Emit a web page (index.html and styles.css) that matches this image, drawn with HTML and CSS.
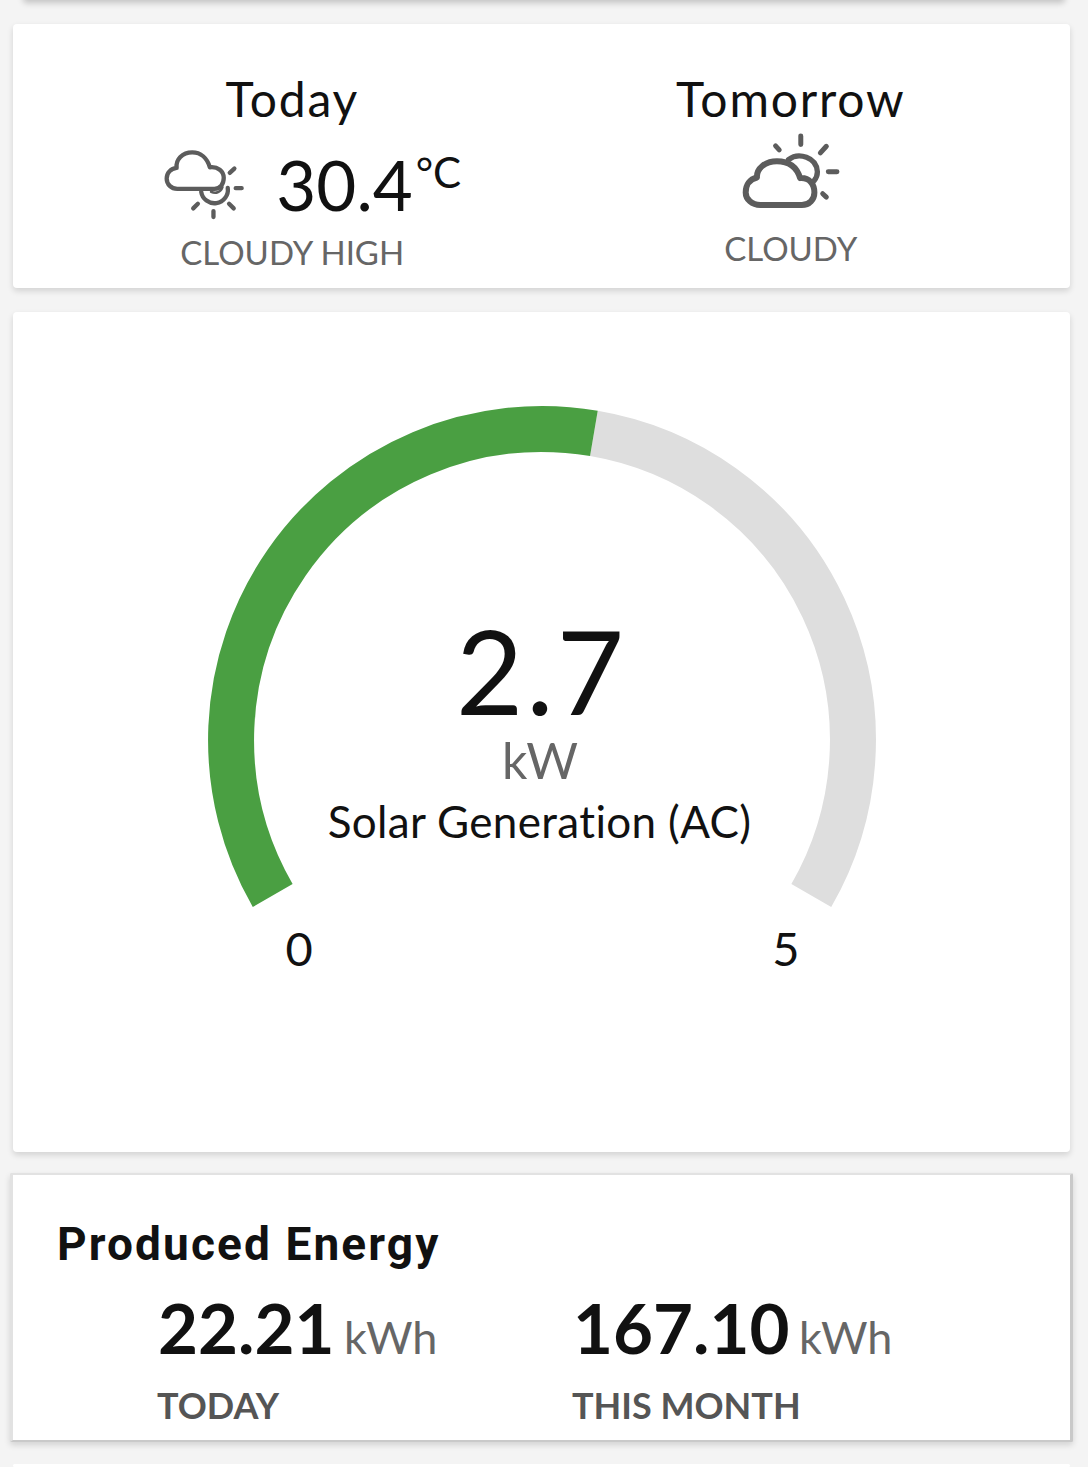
FILE: index.html
```html
<!DOCTYPE html>
<html lang="en">
  <head>
    <meta charset="UTF-8" />
    <meta name="viewport" content="width=device-width, initial-scale=1.0" />
    <title>Solar Dashboard</title>
    <link rel="stylesheet" href="styles.css">
  </head>
  <body>
    <div class="card card-prev"></div>

    <div class="card weather">
      <div class="weather-day">
        <div class="day-title">Today</div>
        <div class="today-row">
          <svg class="icon-today" viewBox="70 260 250 220" fill="none" stroke="#5c5c5c" stroke-width="13" stroke-linecap="round" stroke-linejoin="round">
            <path d="M110 383H222C240 383 250 368 250 350C250 330 232 315 208 318C200 290 180 273 155 273C125 273 105 295 108 320C90 322 78 335 78 352C78 370 92 383 110 383Z" />
            <path d="M262 380A40 40 0 0 1 182 392" />
            <path d="M246 378C240 395 225 398 212 392" stroke-width="8" />
            <path d="M268 335L282 322M286 381H304M266 428L280 442M219 450V468M172 428L158 442" />
          </svg>
          <span class="temp">30.4</span>
          <span class="temp-unit">°C</span>
        </div>
        <div class="condition">CLOUDY HIGH</div>
      </div>
      <div class="weather-day">
        <div class="day-title">Tomorrow</div>
        <svg class="icon-tomorrow" viewBox="240 215 305 235" fill="none" stroke="#5c5c5c" stroke-linecap="round" stroke-linejoin="round">
          <path stroke-width="18" d="M300 435H425C448 435 463 418 463 397C463 372 448 352 420 354C410 320 385 303 350 303C315 303 288 325 290 352C268 357 256 375 256 397C256 418 275 435 300 435Z" />
          <path stroke-width="16" d="M385 298C415 275 470 290 472 335C472 345 468 355 462 362" />
          <path stroke-width="15" d="M422 227V253M346 257L357 269M499 258L481 278M505 335H531M488 401L499 411" />
        </svg>
        <div class="condition">CLOUDY</div>
      </div>
    </div>

    <div class="card gauge-card">
      <div class="gauge">
        <svg class="gauge-arc" viewBox="0 0 668 510" fill="none" stroke-width="46">
          <path stroke="#dedede" d="M385.9 27.4A311 311 0 0 1 603.3 489.5" />
          <path stroke="#4a9f42" d="M64.7 489.5A311 311 0 0 1 385.9 27.4" />
        </svg>
        <div class="gauge-text">
          <div class="gauge-value">2.7</div>
          <div class="gauge-unit">kW</div>
          <div class="gauge-label">Solar Generation (AC)</div>
        </div>
        <div class="gauge-scale">
          <span>0</span>
          <span>5</span>
        </div>
      </div>
    </div>

    <div class="card energy">
      <h2 class="energy-title">Produced Energy</h2>
      <div class="energy-row">
        <div class="energy-col">
          <div class="energy-amount"><b>22.21</b> <span>kWh</span></div>
          <div class="energy-period">TODAY</div>
        </div>
        <div class="energy-col">
          <div class="energy-amount"><b>167.10</b> <span>kWh</span></div>
          <div class="energy-period">THIS MONTH</div>
        </div>
      </div>
    </div>

    <div class="card card-next"></div>
  </body>
</html>
```

FILE: styles.css
```css
html,
body {
  height: 1467px;
  overflow: hidden;
}

body {
  font-family: Lato, 'Open Sans', sans-serif;
  font-variant-ligatures: none;
  margin: 0;
  padding: 0 18px 0 13px;
  background-color: #f4f4f4;
  color: #111;
  display: flex;
  flex-direction: column;
}

.card {
  background-color: white;
  border-radius: 4px;
  box-shadow: 0 3px 6px rgba(0, 0, 0, 0.14);
  flex: none;
}

.card-prev {
  height: 20px;
  margin: -20px 5px 24px 10px;
  box-shadow: 0 3px 6px rgba(0, 0, 0, 0.2);
}

.card-next {
  height: 3px;
  margin-top: 22px;
  box-shadow: none;
}

/* weather */
.weather {
  height: 264px;
  box-sizing: border-box;
  padding: 0 30px;
  display: grid;
  grid-template-columns: 1fr 1fr;
}

.weather-day {
  display: flex;
  flex-direction: column;
  align-items: center;
  padding-top: 45px;
}

.day-title {
  font-size: 48px;
  letter-spacing: 1.8px;
  line-height: 60px;
}

.today-row {
  display: flex;
  align-items: flex-start;
  height: 102px;
  margin-left: 41px;
}

.icon-today {
  width: 83px;
  height: 73px;
  margin-top: 19px;
  margin-right: 29px;
}

.temp {
  font-size: 69px;
  line-height: 76px;
  margin-top: 18px;
  margin-right: 3px;
}

.temp-unit {
  font-size: 42px;
  line-height: 46px;
  margin-top: 20px;
}

.icon-tomorrow {
  width: 102px;
  height: 78px;
  margin-top: 3px;
  margin-bottom: 17px;
}

.condition {
  font-size: 33px;
  line-height: 42px;
  color: #666;
}

/* gauge */
.gauge-card {
  height: 840px;
  margin-top: 24px;
  display: flex;
  justify-content: center;
  padding-top: 94px;
  box-sizing: border-box;
}

.gauge {
  position: relative;
  width: 668px;
  height: 620px;
}

.gauge-arc {
  display: block;
  width: 668px;
  height: 510px;
}

.gauge-text {
  position: absolute;
  top: 209px;
  left: 0;
  right: 0;
  text-align: center;
}

.gauge-value {
  font-size: 116px;
  letter-spacing: 3px;
  line-height: 112px;
}

.gauge-unit {
  font-size: 50px;
  line-height: 56px;
  margin-top: 5px;
  padding-right: 3px;
  color: #666;
}

.gauge-label {
  font-size: 44px;
  letter-spacing: 0.35px;
  line-height: 60px;
  margin-top: 3px;
  padding-right: 4px;
}

.gauge-scale {
  position: absolute;
  top: 512px;
  left: 78px;
  right: 76px;
  display: flex;
  justify-content: space-between;
  font-size: 47px;
  line-height: 60px;
}

/* produced energy */
.energy {
  height: 269px;
  box-sizing: border-box;
  margin: 21px -3px 0;
  border: 3px solid #c9c9c9;
  border-width: 2px 3px;
  border-top-color: #e2e2e2;
  border-left-color: #e2e2e2;
  border-radius: 2px;
  padding: 40px 0 0 44px;
}

.energy-title {
  font-family: Roboto, sans-serif;
  font-size: 46px;
  font-weight: 700;
  letter-spacing: 2.1px;
  line-height: 58px;
  margin: 0;
}

.energy-row {
  display: flex;
  margin-top: 13px;
  padding-left: 101px;
}

.energy-col:first-child {
  width: 415px;
}

.energy-amount {
  line-height: 84px;
  font-size: 45px;
  color: #666;
  white-space: nowrap;
}

.energy-amount b {
  font-size: 69px;
  font-weight: 700;
  color: #111;
  margin-right: -2px;
}

.energy-period {
  font-size: 36px;
  font-weight: 700;
  line-height: 46px;
  margin-top: 3px;
  margin-left: -1px;
  color: #555;
}
```
